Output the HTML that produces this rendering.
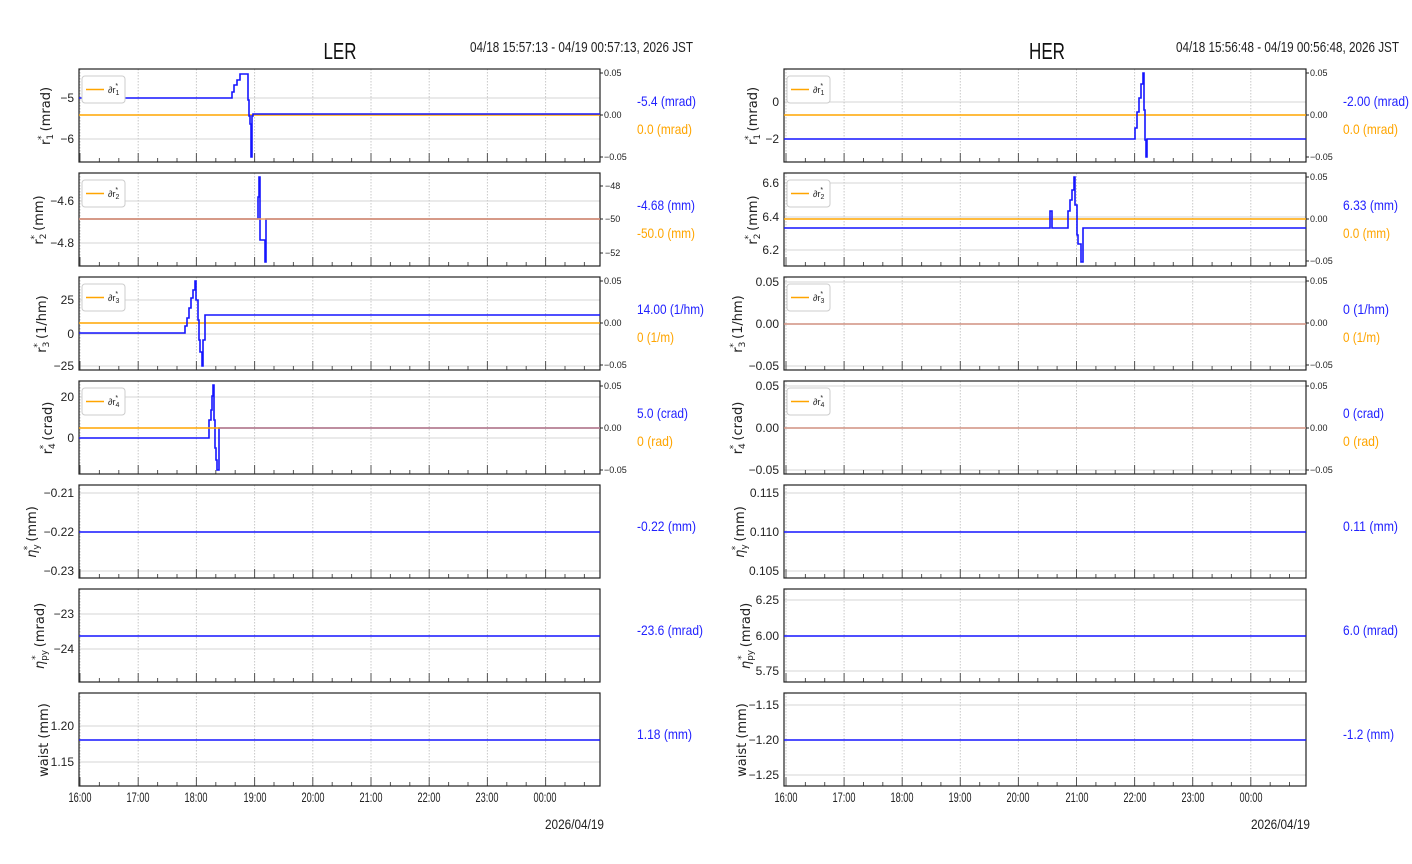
<!DOCTYPE html>
<html><head><meta charset="utf-8"><style>
html,body{margin:0;padding:0;background:#fff;}
svg{display:block;font-family:"Liberation Sans Narrow","Liberation Sans",sans-serif;}
.t{font-size:12px;fill:#222;}
.tl{font-size:14px;fill:#222;}
.s{font-size:9px;fill:#222;}
.yl{font-size:13px;fill:#222;font-family:"DejaVu Sans","Liberation Sans",sans-serif;}
.b{font-size:14px;fill:#2222ff;}
.o{font-size:14px;fill:#ffa500;}
.hg{stroke:#d4d4d4;stroke-width:1;}
.bl{fill:none;stroke:#1515ff;stroke-width:1.6;}
.or{stroke:#ffa500;stroke-width:1.4;}
.fr{fill:none;stroke:#222;stroke-width:1.2;}
</style></head><body>
<svg width="1412" height="864" viewBox="0 0 1412 864" xmlns="http://www.w3.org/2000/svg">
<defs>
<g id="gl">
<path d="M1 0V93M59.2 0V93M117.4 0V93M175.6 0V93M233.8 0V93M292 0V93M350.2 0V93M408.4 0V93M466.6 0V93" stroke="#c8c8c8" stroke-dasharray="1.5,1.5"/>
<path d="M1 93v-9M59.2 93v-9M117.4 93v-9M175.6 93v-9M233.8 93v-9M292 93v-9M350.2 93v-9M408.4 93v-9M466.6 93v-9" stroke="#555" stroke-width="1"/>
<path d="M20.4 93v-4M39.8 93v-4M78.6 93v-4M98 93v-4M136.8 93v-4M156.2 93v-4M195 93v-4M214.4 93v-4M253.2 93v-4M272.6 93v-4M311.4 93v-4M330.8 93v-4M369.6 93v-4M389 93v-4M427.8 93v-4M447.2 93v-4M486 93v-4M505.4 93v-4" stroke="#555"/>
<rect x="0" y="0" width="521" height="93" class="fr"/>
</g>
<g id="gr">
<path d="M2 0V93M60.1 0V93M118.2 0V93M176.3 0V93M234.4 0V93M292.5 0V93M350.6 0V93M408.7 0V93M466.8 0V93" stroke="#c8c8c8" stroke-dasharray="1.5,1.5"/>
<path d="M2 93v-9M60.1 93v-9M118.2 93v-9M176.3 93v-9M234.4 93v-9M292.5 93v-9M350.6 93v-9M408.7 93v-9M466.8 93v-9" stroke="#555"/>
<path d="M21.4 93v-4M40.7 93v-4M79.5 93v-4M98.8 93v-4M137.6 93v-4M156.9 93v-4M195.7 93v-4M215 93v-4M253.8 93v-4M273.1 93v-4M311.9 93v-4M331.2 93v-4M370 93v-4M389.3 93v-4M428.1 93v-4M447.4 93v-4M486.2 93v-4M505.5 93v-4" stroke="#555"/>
<rect x="0" y="0" width="522" height="93" class="fr"/>
</g>
<g id="lg">
<rect x="0" y="0" width="43" height="27" rx="3" fill="#fff" stroke="#ccc"/>
<line x1="4" y1="13.5" x2="22" y2="13.5" class="or" stroke-width="1.6"/>
</g>
</defs>

<text x="340" y="59" font-size="23" text-anchor="middle" fill="#111" textLength="33" lengthAdjust="spacingAndGlyphs">LER</text>
<text x="470" y="52" font-size="15" fill="#222" textLength="223" lengthAdjust="spacingAndGlyphs">04/18 15:57:13 - 04/19 00:57:13, 2026 JST</text>
<text x="1047" y="59" font-size="23" text-anchor="middle" fill="#111" textLength="36" lengthAdjust="spacingAndGlyphs">HER</text>
<text x="1176" y="52" font-size="15" fill="#222" textLength="223" lengthAdjust="spacingAndGlyphs">04/18 15:56:48 - 04/19 00:56:48, 2026 JST</text>

<path class="hg" d="M79 98H600M79 139H600"/>
<use href="#gl" x="79" y="69"/>
<line x1="79" y1="115" x2="600" y2="115" class="or"/>
<path class="bl" d="M79 98H232V92H234V85H237V80H240V74H248V100H249V116H250V124H251V157H252V116H253V114H600"/>
<use href="#lg" x="82" y="76"/><text x="108" y="93" class="s">∂r<tspan font-size="7" dy="2">1</tspan><tspan font-size="7" dy="-7" dx="-4">*</tspan></text>
<text x="74" y="102" class="t" text-anchor="end">−5</text><text x="74" y="143" class="t" text-anchor="end">−6</text>
<path d="M600 73h3M600 115h3M600 157h3" stroke="#222"/>
<text x="604" y="76" class="s">0.05</text><text x="604" y="118" class="s">0.00</text><text x="604" y="160" class="s">−0.05</text>
<text x="637" y="106" class="b" textLength="59" lengthAdjust="spacingAndGlyphs">-5.4 (mrad)</text><text x="637" y="134" class="o" textLength="55" lengthAdjust="spacingAndGlyphs">0.0 (mrad)</text>
<text transform="translate(50,116) rotate(-90)" class="yl" text-anchor="middle">r<tspan font-size="9" dy="3">1</tspan><tspan font-size="9" dy="-9" dx="-6">*</tspan><tspan dy="6"> (mrad)</tspan></text>

<path class="hg" d="M79 201H600M79 243H600"/>
<use href="#gl" x="79" y="173"/>
<path class="bl" d="M79 219H258V197H259V177H260V240H265V262H266V219H600"/>
<line x1="79" y1="219" x2="600" y2="219" stroke="#f0a060" stroke-width="1.6"/>
<use href="#lg" x="82" y="180"/><text x="108" y="197" class="s">∂r<tspan font-size="7" dy="2">2</tspan><tspan font-size="7" dy="-7" dx="-4">*</tspan></text>
<text x="74" y="205" class="t" text-anchor="end">−4.6</text><text x="74" y="247" class="t" text-anchor="end">−4.8</text>
<path d="M600 186h3M600 219h3M600 253h3" stroke="#222"/>
<text x="605" y="189" class="s">−48</text><text x="605" y="222" class="s">−50</text><text x="605" y="256" class="s">−52</text>
<text x="637" y="210" class="b" textLength="58" lengthAdjust="spacingAndGlyphs">-4.68 (mm)</text><text x="637" y="238" class="o" textLength="58" lengthAdjust="spacingAndGlyphs">-50.0 (mm)</text>
<text transform="translate(43,220) rotate(-90)" class="yl" text-anchor="middle">r<tspan font-size="9" dy="3">2</tspan><tspan font-size="9" dy="-9" dx="-6">*</tspan><tspan dy="6"> (mm)</tspan></text>

<path class="hg" d="M79 300H600M79 334H600M79 366H600"/>
<use href="#gl" x="79" y="277"/>
<line x1="79" y1="323" x2="600" y2="323" class="or"/>
<path class="bl" d="M79 333H185V326H187V318H189V308H191V298H193V290H195V281H196V300H198V320H199V340H200V352H202V366H203V340H205V315H600"/>
<use href="#lg" x="82" y="284"/><text x="108" y="301" class="s">∂r<tspan font-size="7" dy="2">3</tspan><tspan font-size="7" dy="-7" dx="-4">*</tspan></text>
<text x="74" y="304" class="t" text-anchor="end">25</text><text x="74" y="338" class="t" text-anchor="end">0</text><text x="74" y="370" class="t" text-anchor="end">−25</text>
<path d="M600 281h3M600 323h3M600 365h3" stroke="#222"/>
<text x="604" y="284" class="s">0.05</text><text x="604" y="326" class="s">0.00</text><text x="604" y="368" class="s">−0.05</text>
<text x="637" y="314" class="b" textLength="67" lengthAdjust="spacingAndGlyphs">14.00 (1/hm)</text><text x="637" y="342" class="o" textLength="37" lengthAdjust="spacingAndGlyphs">0 (1/m)</text>
<text transform="translate(46,324) rotate(-90)" class="yl" text-anchor="middle">r<tspan font-size="9" dy="3">3</tspan><tspan font-size="9" dy="-9" dx="-6">*</tspan><tspan dy="6"> (1/hm)</tspan></text>

<path class="hg" d="M79 397H600M79 438H600"/>
<use href="#gl" x="79" y="381"/>
<path class="bl" d="M79 438H209V420H211V410H212V396H213V385H214V420H215V448H216V460H217V470H219V428H600"/>
<line x1="79" y1="428" x2="220" y2="428" class="or"/><line x1="220" y1="428" x2="600" y2="428" stroke="#d09080" stroke-width="1.6"/>
<use href="#lg" x="82" y="388"/><text x="108" y="405" class="s">∂r<tspan font-size="7" dy="2">4</tspan><tspan font-size="7" dy="-7" dx="-4">*</tspan></text>
<text x="74" y="401" class="t" text-anchor="end">20</text><text x="74" y="442" class="t" text-anchor="end">0</text>
<path d="M600 386h3M600 428h3M600 470h3" stroke="#222"/>
<text x="604" y="389" class="s">0.05</text><text x="604" y="431" class="s">0.00</text><text x="604" y="473" class="s">−0.05</text>
<text x="637" y="418" class="b" textLength="51" lengthAdjust="spacingAndGlyphs">5.0 (crad)</text><text x="637" y="446" class="o" textLength="36" lengthAdjust="spacingAndGlyphs">0 (rad)</text>
<text transform="translate(52,428) rotate(-90)" class="yl" text-anchor="middle">r<tspan font-size="9" dy="3">4</tspan><tspan font-size="9" dy="-9" dx="-6">*</tspan><tspan dy="6"> (crad)</tspan></text>

<path class="hg" d="M79 493H600M79 532H600M79 571H600"/>
<use href="#gl" x="79" y="485"/>
<line x1="79" y1="532" x2="600" y2="532" class="bl"/>
<text x="74" y="497" class="t" text-anchor="end">−0.21</text><text x="74" y="536" class="t" text-anchor="end">−0.22</text><text x="74" y="575" class="t" text-anchor="end">−0.23</text>
<text x="637" y="531" class="b" textLength="59" lengthAdjust="spacingAndGlyphs">-0.22 (mm)</text>
<text transform="translate(36,532) rotate(-90)" class="yl" text-anchor="middle"><tspan font-style="italic">η</tspan><tspan font-size="9" dy="3">y</tspan><tspan font-size="9" dy="-9" dx="-6">*</tspan><tspan dy="6"> (mm)</tspan></text>

<path class="hg" d="M79 614H600M79 649H600"/>
<use href="#gl" x="79" y="589"/>
<line x1="79" y1="636" x2="600" y2="636" class="bl"/>
<text x="74" y="618" class="t" text-anchor="end">−23</text><text x="74" y="653" class="t" text-anchor="end">−24</text>
<text x="637" y="635" class="b" textLength="66" lengthAdjust="spacingAndGlyphs">-23.6 (mrad)</text>
<text transform="translate(44,636) rotate(-90)" class="yl" text-anchor="middle"><tspan font-style="italic">η</tspan><tspan font-size="9" dy="3">py</tspan><tspan font-size="9" dy="-9" dx="-10">*</tspan><tspan dy="6" dx="4"> (mrad)</tspan></text>

<path class="hg" d="M79 726H600M79 762H600"/>
<use href="#gl" x="79" y="693"/>
<line x1="79" y1="740" x2="600" y2="740" class="bl"/>
<text x="74" y="730" class="t" text-anchor="end">1.20</text><text x="74" y="766" class="t" text-anchor="end">1.15</text>
<text x="637" y="739" class="b" textLength="55" lengthAdjust="spacingAndGlyphs">1.18 (mm)</text>
<text transform="translate(48,740) rotate(-90)" class="yl" text-anchor="middle">waist (mm)</text>

<g class="tl" text-anchor="middle">
<text x="80" y="802" textLength="23" lengthAdjust="spacingAndGlyphs">16:00</text><text x="138" y="802" textLength="23" lengthAdjust="spacingAndGlyphs">17:00</text><text x="196" y="802" textLength="23" lengthAdjust="spacingAndGlyphs">18:00</text><text x="255" y="802" textLength="23" lengthAdjust="spacingAndGlyphs">19:00</text><text x="313" y="802" textLength="23" lengthAdjust="spacingAndGlyphs">20:00</text><text x="371" y="802" textLength="23" lengthAdjust="spacingAndGlyphs">21:00</text><text x="429" y="802" textLength="23" lengthAdjust="spacingAndGlyphs">22:00</text><text x="487" y="802" textLength="23" lengthAdjust="spacingAndGlyphs">23:00</text><text x="545" y="802" textLength="23" lengthAdjust="spacingAndGlyphs">00:00</text>
</g>
<text x="545" y="829" class="tl" textLength="59" lengthAdjust="spacingAndGlyphs">2026/04/19</text>

<path class="hg" d="M784 102H1306M784 139H1306"/>
<use href="#gr" x="784" y="69"/>
<line x1="784" y1="115" x2="1306" y2="115" class="or"/>
<path class="bl" d="M784 139H1135V128H1137V112H1139V98H1141V84H1143V73H1144V110H1145V140H1146V157H1147V139H1306"/>
<use href="#lg" x="787" y="76"/><text x="813" y="93" class="s">∂r<tspan font-size="7" dy="2">1</tspan><tspan font-size="7" dy="-7" dx="-4">*</tspan></text>
<text x="779" y="106" class="t" text-anchor="end">0</text><text x="779" y="143" class="t" text-anchor="end">−2</text>
<path d="M1306 73h3M1306 115h3M1306 157h3" stroke="#222"/>
<text x="1310" y="76" class="s">0.05</text><text x="1310" y="118" class="s">0.00</text><text x="1310" y="160" class="s">−0.05</text>
<text x="1343" y="106" class="b" textLength="66" lengthAdjust="spacingAndGlyphs">-2.00 (mrad)</text><text x="1343" y="134" class="o" textLength="55" lengthAdjust="spacingAndGlyphs">0.0 (mrad)</text>
<text transform="translate(757,116) rotate(-90)" class="yl" text-anchor="middle">r<tspan font-size="9" dy="3">1</tspan><tspan font-size="9" dy="-9" dx="-6">*</tspan><tspan dy="6"> (mrad)</tspan></text>

<path class="hg" d="M784 183H1306M784 217H1306M784 250H1306"/>
<use href="#gr" x="784" y="173"/>
<line x1="784" y1="219" x2="1306" y2="219" class="or"/>
<path class="bl" d="M784 228H1050V211H1052V228H1068V211H1070V200H1072V190H1074V177H1075V205H1077V235H1078V244H1081V262H1083V228H1306"/>
<use href="#lg" x="787" y="180"/><text x="813" y="197" class="s">∂r<tspan font-size="7" dy="2">2</tspan><tspan font-size="7" dy="-7" dx="-4">*</tspan></text>
<text x="779" y="187" class="t" text-anchor="end">6.6</text><text x="779" y="221" class="t" text-anchor="end">6.4</text><text x="779" y="254" class="t" text-anchor="end">6.2</text>
<path d="M1306 177h3M1306 219h3M1306 261h3" stroke="#222"/>
<text x="1310" y="180" class="s">0.05</text><text x="1310" y="222" class="s">0.00</text><text x="1310" y="264" class="s">−0.05</text>
<text x="1343" y="210" class="b" textLength="55" lengthAdjust="spacingAndGlyphs">6.33 (mm)</text><text x="1343" y="238" class="o" textLength="47" lengthAdjust="spacingAndGlyphs">0.0 (mm)</text>
<text transform="translate(757,220) rotate(-90)" class="yl" text-anchor="middle">r<tspan font-size="9" dy="3">2</tspan><tspan font-size="9" dy="-9" dx="-6">*</tspan><tspan dy="6"> (mm)</tspan></text>

<path class="hg" d="M784 282H1306M784 324H1306M784 366H1306"/>
<use href="#gr" x="784" y="277"/>
<line x1="784" y1="324" x2="1306" y2="324" stroke="#d09080" stroke-width="1.6"/>
<use href="#lg" x="787" y="284"/><text x="813" y="301" class="s">∂r<tspan font-size="7" dy="2">3</tspan><tspan font-size="7" dy="-7" dx="-4">*</tspan></text>
<text x="779" y="286" class="t" text-anchor="end">0.05</text><text x="779" y="328" class="t" text-anchor="end">0.00</text><text x="779" y="370" class="t" text-anchor="end">−0.05</text>
<path d="M1306 281h3M1306 323h3M1306 365h3" stroke="#222"/>
<text x="1310" y="284" class="s">0.05</text><text x="1310" y="326" class="s">0.00</text><text x="1310" y="368" class="s">−0.05</text>
<text x="1343" y="314" class="b" textLength="46" lengthAdjust="spacingAndGlyphs">0 (1/hm)</text><text x="1343" y="342" class="o" textLength="37" lengthAdjust="spacingAndGlyphs">0 (1/m)</text>
<text transform="translate(742,324) rotate(-90)" class="yl" text-anchor="middle">r<tspan font-size="9" dy="3">3</tspan><tspan font-size="9" dy="-9" dx="-6">*</tspan><tspan dy="6"> (1/hm)</tspan></text>

<path class="hg" d="M784 386H1306M784 428H1306M784 470H1306"/>
<use href="#gr" x="784" y="381"/>
<line x1="784" y1="428" x2="1306" y2="428" stroke="#d09080" stroke-width="1.6"/>
<use href="#lg" x="787" y="388"/><text x="813" y="405" class="s">∂r<tspan font-size="7" dy="2">4</tspan><tspan font-size="7" dy="-7" dx="-4">*</tspan></text>
<text x="779" y="390" class="t" text-anchor="end">0.05</text><text x="779" y="432" class="t" text-anchor="end">0.00</text><text x="779" y="474" class="t" text-anchor="end">−0.05</text>
<path d="M1306 386h3M1306 428h3M1306 470h3" stroke="#222"/>
<text x="1310" y="389" class="s">0.05</text><text x="1310" y="431" class="s">0.00</text><text x="1310" y="473" class="s">−0.05</text>
<text x="1343" y="418" class="b" textLength="41" lengthAdjust="spacingAndGlyphs">0 (crad)</text><text x="1343" y="446" class="o" textLength="36" lengthAdjust="spacingAndGlyphs">0 (rad)</text>
<text transform="translate(742,428) rotate(-90)" class="yl" text-anchor="middle">r<tspan font-size="9" dy="3">4</tspan><tspan font-size="9" dy="-9" dx="-6">*</tspan><tspan dy="6"> (crad)</tspan></text>

<path class="hg" d="M784 493H1306M784 532H1306M784 571H1306"/>
<use href="#gr" x="784" y="485"/>
<line x1="784" y1="532" x2="1306" y2="532" class="bl"/>
<text x="779" y="497" class="t" text-anchor="end">0.115</text><text x="779" y="536" class="t" text-anchor="end">0.110</text><text x="779" y="575" class="t" text-anchor="end">0.105</text>
<text x="1343" y="531" class="b" textLength="55" lengthAdjust="spacingAndGlyphs">0.11 (mm)</text>
<text transform="translate(744,532) rotate(-90)" class="yl" text-anchor="middle"><tspan font-style="italic">η</tspan><tspan font-size="9" dy="3">y</tspan><tspan font-size="9" dy="-9" dx="-6">*</tspan><tspan dy="6"> (mm)</tspan></text>

<path class="hg" d="M784 600H1306M784 636H1306M784 671H1306"/>
<use href="#gr" x="784" y="589"/>
<line x1="784" y1="636" x2="1306" y2="636" class="bl"/>
<text x="779" y="604" class="t" text-anchor="end">6.25</text><text x="779" y="640" class="t" text-anchor="end">6.00</text><text x="779" y="675" class="t" text-anchor="end">5.75</text>
<text x="1343" y="635" class="b" textLength="55" lengthAdjust="spacingAndGlyphs">6.0 (mrad)</text>
<text transform="translate(750,636) rotate(-90)" class="yl" text-anchor="middle"><tspan font-style="italic">η</tspan><tspan font-size="9" dy="3">py</tspan><tspan font-size="9" dy="-9" dx="-10">*</tspan><tspan dy="6" dx="4"> (mrad)</tspan></text>

<path class="hg" d="M784 705H1306M784 740H1306M784 775H1306"/>
<use href="#gr" x="784" y="693"/>
<line x1="784" y1="740" x2="1306" y2="740" class="bl"/>
<text x="779" y="709" class="t" text-anchor="end">−1.15</text><text x="779" y="744" class="t" text-anchor="end">−1.20</text><text x="779" y="779" class="t" text-anchor="end">−1.25</text>
<text x="1343" y="739" class="b" textLength="51" lengthAdjust="spacingAndGlyphs">-1.2 (mm)</text>
<text transform="translate(746,740) rotate(-90)" class="yl" text-anchor="middle">waist (mm)</text>

<g class="tl" text-anchor="middle">
<text x="786" y="802" textLength="23" lengthAdjust="spacingAndGlyphs">16:00</text><text x="844" y="802" textLength="23" lengthAdjust="spacingAndGlyphs">17:00</text><text x="902" y="802" textLength="23" lengthAdjust="spacingAndGlyphs">18:00</text><text x="960" y="802" textLength="23" lengthAdjust="spacingAndGlyphs">19:00</text><text x="1018" y="802" textLength="23" lengthAdjust="spacingAndGlyphs">20:00</text><text x="1077" y="802" textLength="23" lengthAdjust="spacingAndGlyphs">21:00</text><text x="1135" y="802" textLength="23" lengthAdjust="spacingAndGlyphs">22:00</text><text x="1193" y="802" textLength="23" lengthAdjust="spacingAndGlyphs">23:00</text><text x="1251" y="802" textLength="23" lengthAdjust="spacingAndGlyphs">00:00</text>
</g>
<text x="1251" y="829" class="tl" textLength="59" lengthAdjust="spacingAndGlyphs">2026/04/19</text>
</svg>
</body></html>
